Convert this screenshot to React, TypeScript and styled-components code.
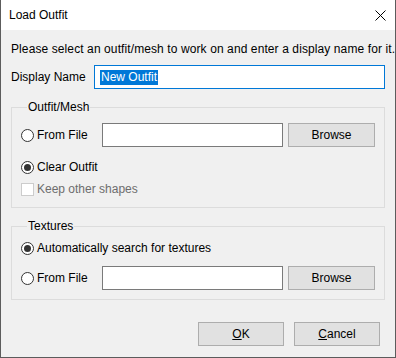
import styled, { createGlobalStyle } from "styled-components";

const GlobalStyle = createGlobalStyle`
    html, body {
        margin: 0;
        padding: 0;
        background: #ffffff;
    }
    body {
        font-family: "Liberation Sans", Arial, sans-serif;
        font-size: 12px;
        color: #000000;
    }
`;

const Window = styled.div`
    width: 396px;
    height: 358px;
    box-sizing: border-box;
    border: 1px solid #5c5c5c;
    border-top: none;
    display: flex;
    flex-direction: column;
    background: #f0f0f0;
`;

const TitleBar = styled.div`
    height: 30px;
    flex: none;
    background: #ffffff;
    display: flex;
    align-items: center;
    justify-content: space-between;
    padding: 0 9px 0 8px;
`;

const Title = styled.span`
    font-size: 12px;
`;

const Body = styled.div`
    flex: 1;
    padding: 11px 10px 0 10px;
    display: flex;
    flex-direction: column;
`;

const Intro = styled.div`
    line-height: 16px;
    height: 16px;
    white-space: nowrap;
    letter-spacing: 0.1px;
`;

const NameRow = styled.div`
    margin-top: 8px;
    height: 24px;
    display: grid;
    grid-template-columns: 83px 1fr;
    align-items: center;
`;

const Label = styled.span<{ $disabled?: boolean }>`
    line-height: 16px;
    white-space: nowrap;
    color: ${({ $disabled }) => ($disabled ? "#6d6d6d" : "#000000")};
`;

const TextBox = styled.div<{ $focused?: boolean }>`
    box-sizing: border-box;
    height: 24px;
    background: #ffffff;
    border: 1px solid ${({ $focused }) => ($focused ? "#0078d7" : "#7a7a7a")};
    display: flex;
    align-items: center;
    padding: 0 5px;
`;

const Selected = styled.span`
    background: #0078d7;
    color: #ffffff;
    line-height: 15px;
    padding: 0 1px;
`;

const Group = styled.fieldset<{ $top: number; $bottom: number }>`
    margin: 10px 0 0 0;
    padding: ${({ $top, $bottom }) => `${$top}px 10px ${$bottom}px 9px`};
    border: 1px solid #dcdcdc;
    min-width: 0;
`;

const Legend = styled.legend`
    padding: 0 1px;
    margin-left: 6px;
    line-height: 16px;
    height: 16px;
`;

const Row = styled.div<{ $gap?: number; $height?: number }>`
    margin-top: ${({ $gap }) => $gap ?? 0}px;
    height: ${({ $height }) => $height ?? 24}px;
    display: flex;
    align-items: center;
`;

const FileRow = styled.div<{ $gap?: number }>`
    margin-top: ${({ $gap }) => $gap ?? 0}px;
    height: 24px;
    display: grid;
    grid-template-columns: 76px 181px 87px;
    column-gap: 5px;
    align-items: center;
`;

const Choice = styled.label`
    display: flex;
    align-items: center;
    gap: 3px;
`;

const Radio = styled.span<{ $checked?: boolean }>`
    box-sizing: border-box;
    width: 13px;
    height: 13px;
    border-radius: 50%;
    border: 1px solid #333333;
    background: #ffffff;
    display: flex;
    align-items: center;
    justify-content: center;

    &::after {
        content: "";
        width: 7px;
        height: 7px;
        border-radius: 50%;
        background: ${({ $checked }) => ($checked ? "#333333" : "transparent")};
    }
`;

const Check = styled.span`
    box-sizing: border-box;
    width: 13px;
    height: 13px;
    border: 1px solid #cccccc;
    background: #ffffff;
`;

const Button = styled.button`
    box-sizing: border-box;
    height: 24px;
    background: #e1e1e1;
    border: 1px solid #adadad;
    font-family: inherit;
    font-size: 12px;
    color: #000000;
    padding: 0;
`;

const Footer = styled.div`
    margin-top: 22px;
    padding-right: 5px;
    display: flex;
    justify-content: flex-end;
    gap: 10px;
`;

const DialogButton = styled(Button)`
    width: 86px;
`;

const Key = styled.span`
    text-decoration: underline;
`;

const CloseIcon = () => (
    <svg width="11" height="11" viewBox="0 0 11 11">
        <path d="M0.5 0.5 L10.5 10.5 M10.5 0.5 L0.5 10.5" stroke="#000" strokeWidth="1" fill="none" />
    </svg>
);

export default function App() {
    return (
        <>
            <GlobalStyle />
            <Window>
                <TitleBar>
                    <Title>Load Outfit</Title>
                    <CloseIcon />
                </TitleBar>
                <Body>
                    <Intro>Please select an outfit/mesh to work on and enter a display name for it.</Intro>
                    <NameRow>
                        <Label>Display Name</Label>
                        <TextBox $focused>
                            <Selected>New Outfit</Selected>
                        </TextBox>
                    </NameRow>

                    <Group $top={8} $bottom={10}>
                        <Legend>Outfit/Mesh</Legend>
                        <FileRow>
                            <Choice>
                                <Radio />
                                <Label>From File</Label>
                            </Choice>
                            <TextBox />
                            <Button>Browse</Button>
                        </FileRow>
                        <Row $gap={8}>
                            <Choice>
                                <Radio $checked />
                                <Label>Clear Outfit</Label>
                            </Choice>
                        </Row>
                        <Row $gap={2} $height={16}>
                            <Choice>
                                <Check />
                                <Label $disabled>Keep other shapes</Label>
                            </Choice>
                        </Row>
                    </Group>

                    <Group $top={2} $bottom={9}>
                        <Legend>Textures</Legend>
                        <Row>
                            <Choice>
                                <Radio $checked />
                                <Label>Automatically search for textures</Label>
                            </Choice>
                        </Row>
                        <FileRow $gap={6}>
                            <Choice>
                                <Radio />
                                <Label>From File</Label>
                            </Choice>
                            <TextBox />
                            <Button>Browse</Button>
                        </FileRow>
                    </Group>

                    <Footer>
                        <DialogButton>
                            <Key>O</Key>K
                        </DialogButton>
                        <DialogButton>
                            <Key>C</Key>ancel
                        </DialogButton>
                    </Footer>
                </Body>
            </Window>
        </>
    );
}
